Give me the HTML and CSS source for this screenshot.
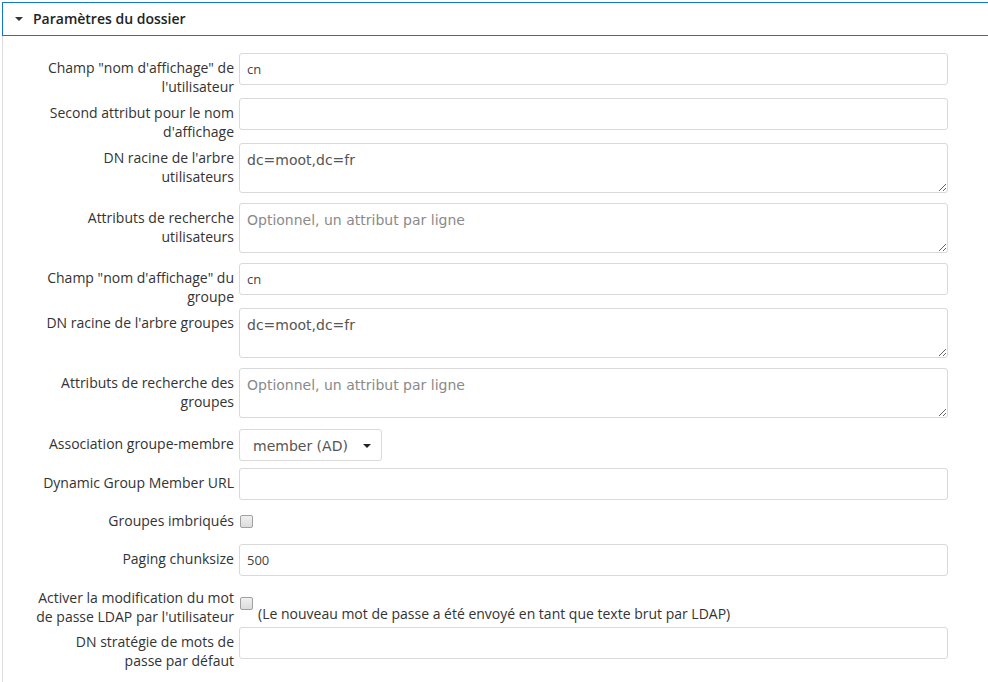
FILE: index.html
```html
<!DOCTYPE html>
<html lang="fr">
<head>
<meta charset="utf-8">
<title>Paramètres du dossier</title>
<link rel="stylesheet" href="styles.css">
</head>
<body>
<div class="panel">
  <div class="panel-head">
    <span class="caret"></span>
    <span class="panel-title">Paramètres du dossier</span>
  </div>
  <div class="panel-body">
    <div class="row r45">
      <label class="lbl">Champ "nom d'affichage" de l'utilisateur</label>
      <div class="ctl"><input class="txt" type="text" value="cn"></div>
    </div>
    <div class="row r45">
      <label class="lbl">Second attribut pour le nom d'affichage</label>
      <div class="ctl"><input class="txt" type="text" value=""></div>
    </div>
    <div class="row r60">
      <label class="lbl">DN racine de l'arbre utilisateurs</label>
      <div class="ctl"><textarea class="area">dc=moot,dc=fr</textarea></div>
    </div>
    <div class="row r60">
      <label class="lbl">Attributs de recherche utilisateurs</label>
      <div class="ctl"><textarea class="area" placeholder="Optionnel, un attribut par ligne"></textarea></div>
    </div>
    <div class="row r45">
      <label class="lbl">Champ "nom d'affichage" du groupe</label>
      <div class="ctl"><input class="txt" type="text" value="cn"></div>
    </div>
    <div class="row r60">
      <label class="lbl">DN racine de l'arbre groupes</label>
      <div class="ctl"><textarea class="area">dc=moot,dc=fr</textarea></div>
    </div>
    <div class="row r61">
      <label class="lbl">Attributs de recherche des groupes</label>
      <div class="ctl"><textarea class="area" placeholder="Optionnel, un attribut par ligne"></textarea></div>
    </div>
    <div class="row r39">
      <label class="lbl">Association groupe-membre</label>
      <div class="ctl">
        <div class="select"><span>member (AD)</span><span class="sel-caret"></span></div>
      </div>
    </div>
    <div class="row r39">
      <label class="lbl">Dynamic Group Member URL</label>
      <div class="ctl"><input class="txt" type="text" value=""></div>
    </div>
    <div class="row r37">
      <label class="lbl lbl-chk">Groupes imbriqués</label>
      <div class="ctl"><span class="chk chk-a"></span></div>
    </div>
    <div class="row r39">
      <label class="lbl">Paging chunksize</label>
      <div class="ctl"><input class="txt" type="text" value="500"></div>
    </div>
    <div class="row r44">
      <label class="lbl">Activer la modification du mot de passe LDAP par l'utilisateur</label>
      <div class="ctl ctl-row"><span class="chk chk-b"></span><span class="note">(Le nouveau mot de passe a été envoyé en tant que texte brut par LDAP)</span></div>
    </div>
    <div class="row r45">
      <label class="lbl">DN stratégie de mots de<br>passe par défaut</label>
      <div class="ctl"><input class="txt" type="text" value=""></div>
    </div>
  </div>
</div>
</body>
</html>
```

FILE: styles.css
```css
html, body {
  margin: 0;
  padding: 0;
  background: #fff;
  overflow: hidden;
}
body {
  font-family: "Open Sans", "Liberation Sans", sans-serif;
  font-size: 14px;
  color: #333;
  width: 988px;
  height: 682px;
}
.panel {
  margin: 2px 0 0 2px;
  width: 1010px;
}
.panel-head {
  height: 32px;
  border: 1px solid #1177d1;
  display: flex;
  align-items: center;
  background: #fff;
}
.caret {
  width: 0;
  height: 0;
  border-left: 4px solid transparent;
  border-right: 4px solid transparent;
  border-top: 4px solid #333;
  margin: 0 0 0 12px;
}
.panel-title {
  margin-left: 10px;
  margin-top: -2px;
  font-weight: 600;
  color: #222;
  font-size: 14px;
}
.panel-body {
  border-left: 1px solid #dcdcdc;
  padding-top: 17px;
  height: 629px;
  overflow: hidden;
}
.row {
  display: flex;
  align-items: flex-start;
}
.r45 { height: 45px; }
.r60 { height: 60px; }
.r61 { height: 61px; }
.r39 { height: 39px; }
.r37 { height: 37px; }
.r44 { height: 44px; }
.lbl {
  width: 200px;
  margin-left: 31px;
  padding: 5px 5px 0 0;
  text-align: right;
  line-height: 19px;
  box-sizing: content-box;
  color: #333;
}
.lbl-chk { padding-top: 4px; }
.ctl {
  flex: none;
}
.txt {
  display: block;
  box-sizing: border-box;
  width: 709px;
  height: 32px;
  margin: 0;
  padding: 0 7px;
  border: 1px solid #d9d9d9;
  border-radius: 3px;
  font-family: "Open Sans", sans-serif;
  font-size: 13px;
  color: #444;
  background: #fff;
  outline: none;
}
.area {
  display: block;
  box-sizing: border-box;
  width: 709px;
  height: 50px;
  margin: 0;
  padding: 6px 7px;
  border: 1px solid #d9d9d9;
  border-radius: 3px;
  font-family: "DejaVu Sans", Verdana, sans-serif;
  font-size: 14px;
  line-height: 20px;
  color: #555;
  background: #fff;
  resize: vertical;
  outline: none;
}
.area::placeholder {
  color: #8a8a8a;
}
.select {
  box-sizing: border-box;
  width: 143px;
  height: 32px;
  border: 1px solid #d9d9d9;
  border-radius: 3px;
  display: flex;
  align-items: center;
  padding: 2px 0 0 13px;
  font-family: "DejaVu Sans", Verdana, sans-serif;
  font-size: 14px;
  color: #555;
  position: relative;
}
.sel-caret {
  position: absolute;
  right: 10px;
  top: 14px;
  width: 0;
  height: 0;
  border-left: 4px solid transparent;
  border-right: 4px solid transparent;
  border-top: 4px solid #222;
}
.chk {
  display: block;
  box-sizing: border-box;
  width: 13px;
  height: 13px;
  border: 1px solid #a0a0a0;
  border-radius: 2px;
  background: linear-gradient(#f0f0f0, #dcdcdc);
  margin-left: 1px;
}
.chk-a { margin-top: 8px; }
.ctl-row {
  display: flex;
  align-items: flex-start;
}
.chk-b { margin-top: 14px; }
.note {
  margin-left: 5px;
  padding-top: 21px;
  line-height: 19px;
  color: #333;
  white-space: nowrap;
}
```
